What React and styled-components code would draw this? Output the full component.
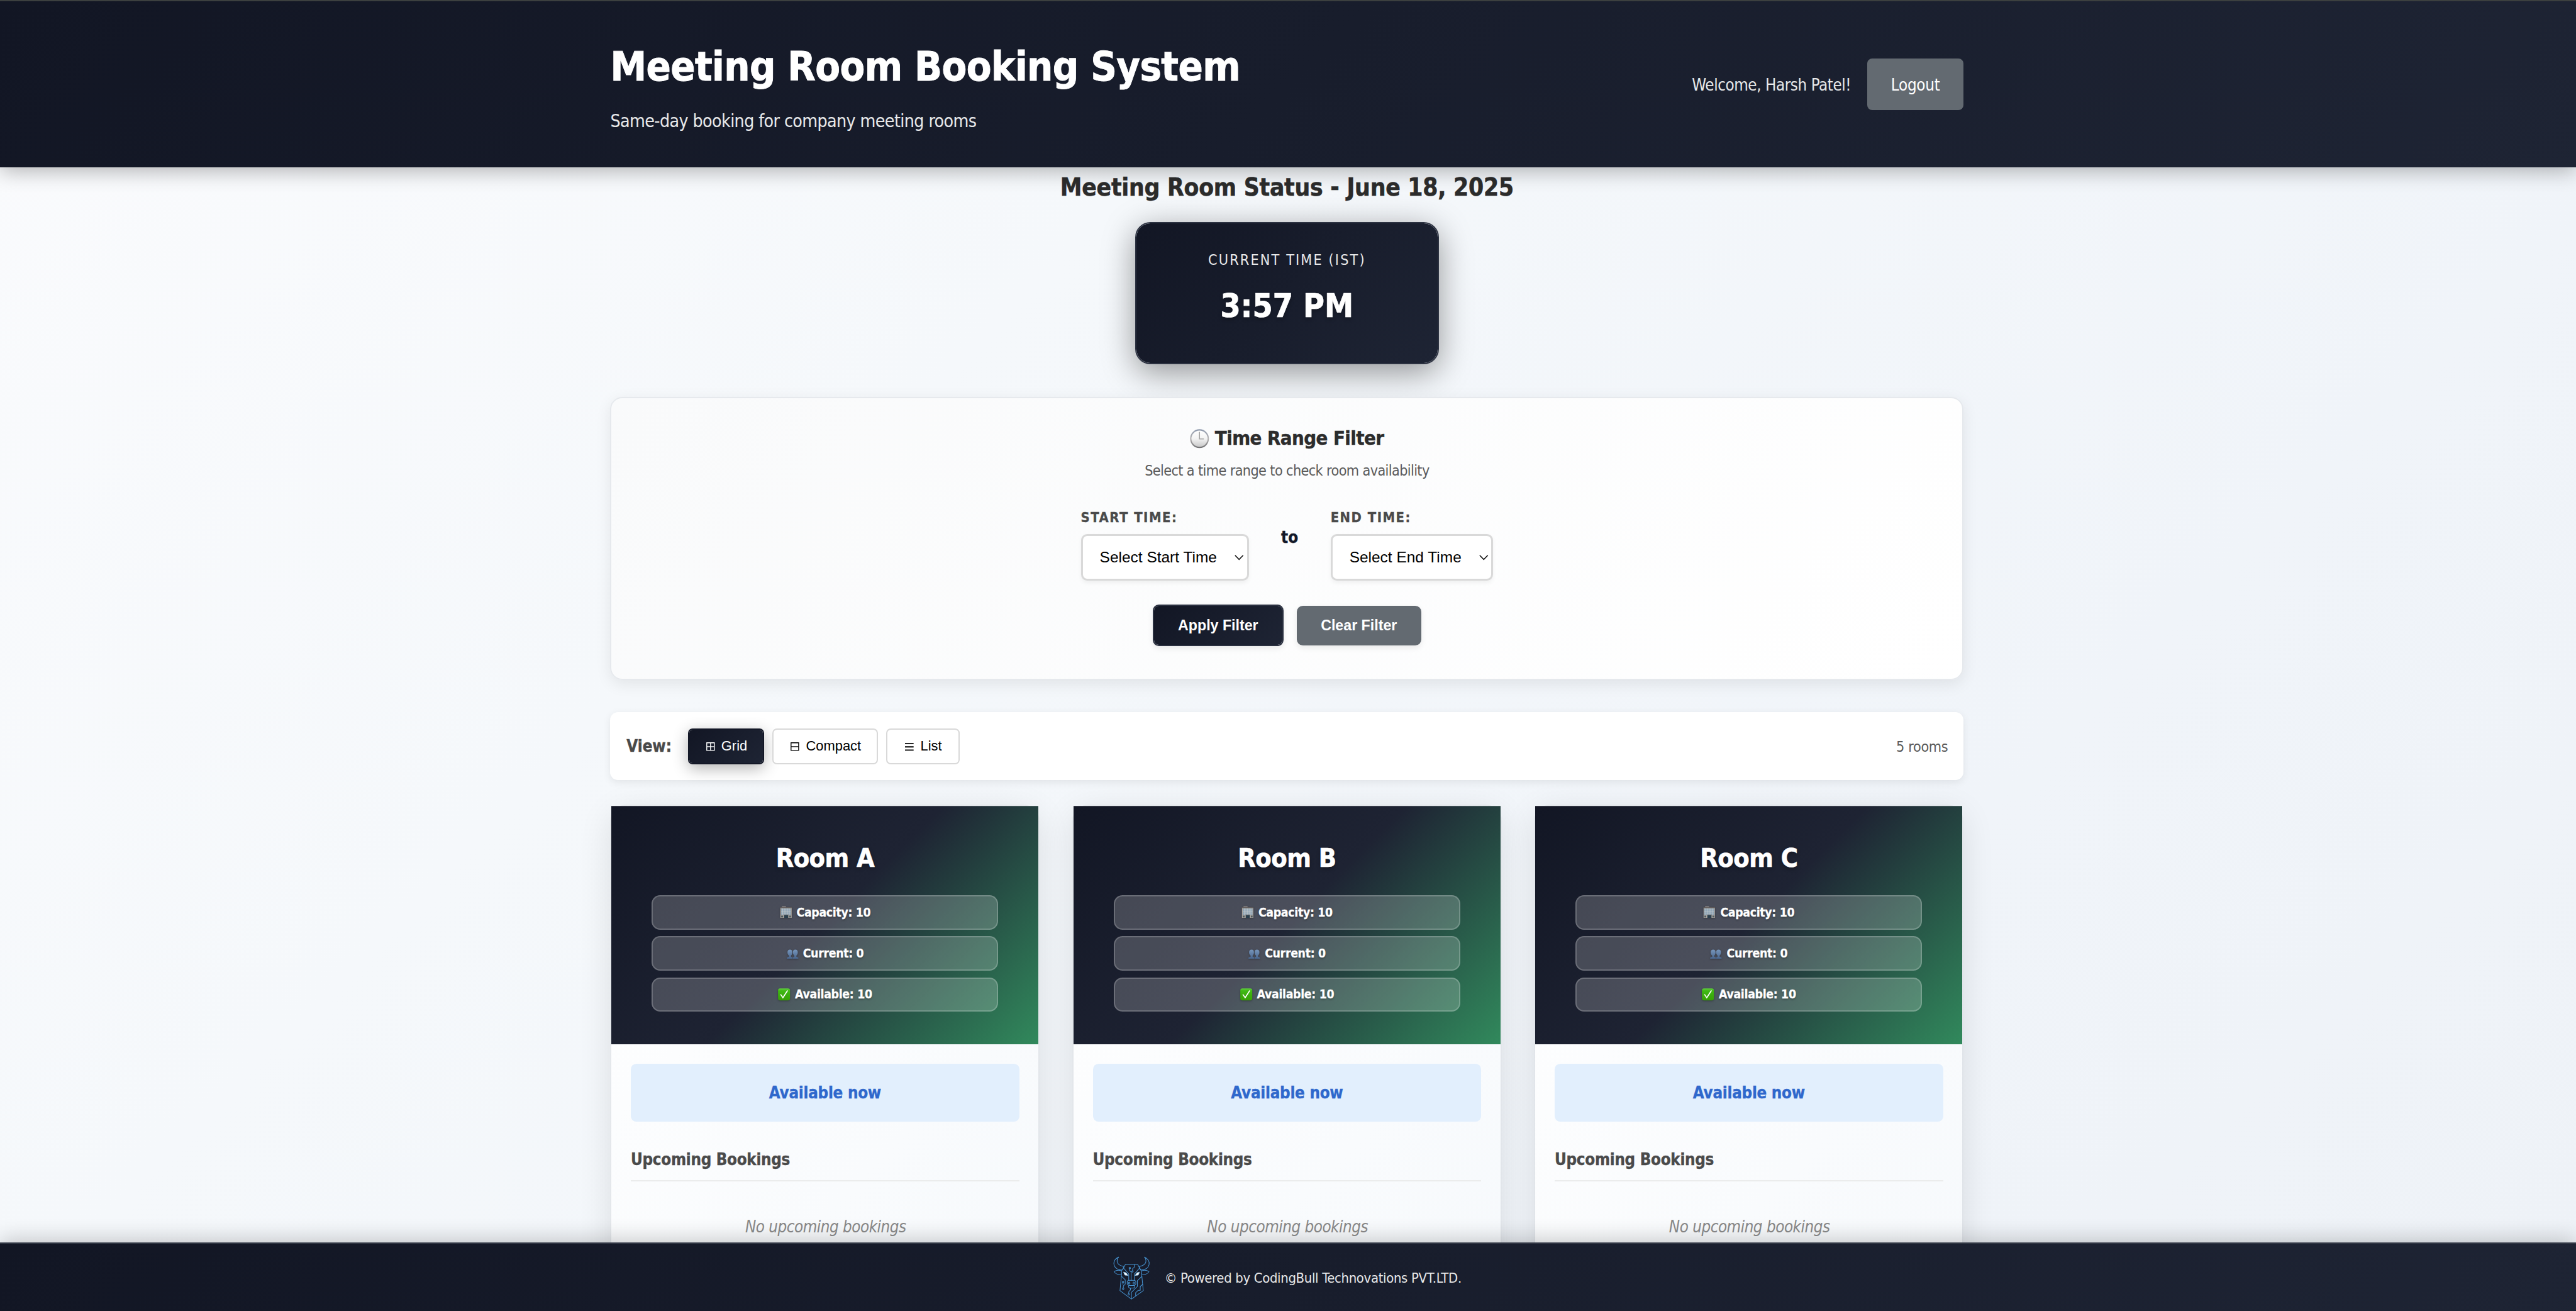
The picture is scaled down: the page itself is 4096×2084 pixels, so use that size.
import React from 'react';
import styled, { createGlobalStyle, css } from 'styled-components';

const SCALE = 4096 / 5086;
const u = (n) => `${(n * SCALE).toFixed(3)}px`;

const sans = '"DejaVu Sans Condensed", "DejaVu Sans", sans-serif';
const arial = '"Liberation Sans", Arial, sans-serif';
const navy = 'linear-gradient(135deg, #121624 0%, #1e2434 100%)';

const heavy = css`
  font-weight: 700;
  -webkit-text-stroke: 0.014em currentColor;
`;

const GlobalStyle = createGlobalStyle`
  * { box-sizing: border-box; }
  html, body { margin: 0; height: 100%; overflow: hidden; }
  h1, h2, h3, h4, p { margin: 0; }
  body { font-family: ${sans}; white-space: nowrap; -webkit-font-smoothing: antialiased; }
`;

const Shell = styled.div`
  display: flex;
  flex-direction: column;
  height: 100vh;
  overflow: hidden;
  background: linear-gradient(135deg, #fafbfd 0%, #f5f8fb 34%, #f0f4f9 72%, #eef2f7 100%);
`;

const Container = styled.div`
  width: ${u(2672)};
  margin: 0 auto;
`;

/* ---------- header ---------- */
const Header = styled.header`
  position: relative;
  z-index: 2;
  flex: none;
  display: flex;
  align-items: center;
  height: ${u(330)};
  padding-right: ${u(4)};
  border-top: 2px solid #3c403f;
  background: ${navy};
  box-shadow: 0 ${u(8)} ${u(40)} rgba(0, 0, 0, 0.3);
`;

const HeaderRow = styled(Container)`
  display: flex;
  justify-content: space-between;
  align-items: center;
`;

const Brand = styled.div`
  padding-top: ${u(19)};
`;

const Title = styled.h1`
  color: #fff;
  font-size: ${u(80)};
  line-height: ${u(94)};
  letter-spacing: -0.0095em;
  ${heavy}
`;

const Subtitle = styled.p`
  margin-top: ${u(32)};
  color: #e7e8e9;
  font-size: ${u(35.2)};
  line-height: ${u(56)};
  letter-spacing: -0.0215em;
`;

const UserArea = styled.div`
  display: flex;
  align-items: center;
  gap: ${u(32)};
`;

const Welcome = styled.span`
  padding-top: ${u(3)};
  color: #e7e8e9;
  font-size: ${u(32)};
  letter-spacing: -0.017em;
`;

const Logout = styled.button`
  width: ${u(190.5)};
  height: ${u(102)};
  padding: ${u(3)} 0 0;
  border: 0;
  border-radius: ${u(10)};
  background: #636a71;
  color: #fff;
  font: 400 ${u(32)} ${sans};
  letter-spacing: -0.0107em;
`;

/* ---------- main ---------- */
const Main = styled.main`
  flex: 1;
  min-height: 0;
  padding-right: ${u(4)};
`;

const Column = styled(Container)`
  display: flex;
  flex-direction: column;
  align-items: center;
`;

const StatusHeading = styled.h2`
  margin-top: ${u(11)};
  color: #2c2c2c;
  font-size: ${u(48)};
  line-height: ${u(58)};
  letter-spacing: -0.006em;
  ${heavy}
`;

const ClockCard = styled.section`
  display: flex;
  flex-direction: column;
  align-items: center;
  width: ${u(600)};
  height: ${u(281)};
  margin-top: ${u(39.6)};
  padding-top: ${u(48)};
  border: 2px solid #2c3241;
  border-radius: ${u(30)};
  background: ${navy} padding-box;
  box-shadow: 0 ${u(16)} ${u(64)} rgba(0, 0, 0, 0.4);
`;

const ClockLabel = styled.p`
  color: #e7e8e9;
  font-size: ${u(28.8)};
  line-height: ${u(46)};
  letter-spacing: 0.0925em;
`;

const ClockValue = styled.p`
  margin-top: ${u(17)};
  color: #fff;
  font-size: ${u(64)};
  line-height: ${u(102)};
  text-shadow: 0 ${u(4)} ${u(8)} rgba(0, 0, 0, 0.3);
  ${heavy}
`;

const FilterCard = styled.section`
  display: flex;
  flex-direction: column;
  align-items: center;
  width: 100%;
  height: ${u(558)};
  margin-top: ${u(64.4)};
  padding-top: ${u(55.8)};
  border: 2px solid #e6e9ed;
  border-radius: ${u(24)};
  background: linear-gradient(135deg, #f9fafb 0%, #ffffff 100%) padding-box;
  box-shadow: 0 ${u(8)} ${u(30)} rgba(0, 0, 0, 0.08);
`;

const FilterTitle = styled.h3`
  display: flex;
  align-items: center;
  gap: ${u(11)};
  color: #2c2c2c;
  font-size: ${u(38.4)};
  line-height: ${u(46)};
  letter-spacing: -0.0185em;
  ${heavy}
`;

const FilterHint = styled.p`
  margin-top: ${u(16.5)};
  color: #5a5a5a;
  font-size: ${u(28.8)};
  line-height: ${u(46)};
  letter-spacing: -0.0264em;
`;

const RangeRow = styled.div`
  display: flex;
  align-items: center;
  gap: ${u(64)};
  margin-top: ${u(48.5)};
`;

const Field = styled.div`
  display: flex;
  flex-direction: column;
  gap: ${u(11.4)};
`;

const FieldLabel = styled.label`
  color: #4a4a4a;
  font-size: ${u(27.2)};
  line-height: ${u(44)};
  letter-spacing: 0.068em;
  ${heavy}
`;

const Select = styled.div`
  display: flex;
  align-items: center;
  justify-content: space-between;
  width: ${({ $w }) => u($w)};
  height: ${u(91)};
  padding: 0 ${u(6)} 0 ${u(33.5)};
  border: 3px solid #d9d9d9;
  border-radius: ${u(12)};
  background: #fff;
  box-shadow: 0 ${u(4)} ${u(8)} rgba(0, 0, 0, 0.05);
  color: #000;
  font: 400 ${u(30.4)} ${arial};
`;

const To = styled.span`
  margin-bottom: ${u(24)};
  color: #121829;
  font-size: ${u(32)};
  line-height: ${u(50)};
  ${heavy}
`;

const Actions = styled.div`
  display: flex;
  align-items: center;
  gap: ${u(26)};
  margin-top: ${u(47.6)};
`;

const ActionButton = styled.button`
  width: ${u(246)};
  height: ${u(78)};
  padding: 0;
  border: 0;
  border-radius: ${u(12)};
  background: #636a71;
  color: #fff;
  font: 700 ${u(28.8)} ${arial};
  box-shadow: 0 ${u(4)} ${u(12)} rgba(0, 0, 0, 0.08);
  ${({ $primary }) => $primary && css`
    width: ${u(258)};
    height: ${u(82.4)};
    border: 2px solid #2a3040;
    background: ${navy} padding-box;
  `}
`;

const ViewBar = styled.section`
  display: flex;
  align-items: center;
  width: 100%;
  height: ${u(134.4)};
  margin-top: ${u(64)};
  padding: 0 ${u(31)} 0 ${u(32)};
  border-radius: ${u(16)};
  background: #fff;
  box-shadow: 0 ${u(4)} ${u(16)} rgba(0, 0, 0, 0.08);
`;

const ViewLabel = styled.span`
  width: ${u(121)};
  color: #4a4a4a;
  font-size: ${u(32)};
  ${heavy}
`;

const ViewOptions = styled.div`
  display: flex;
  gap: ${u(16)};
`;

const ViewButton = styled.button`
  display: flex;
  align-items: center;
  justify-content: center;
  gap: ${u(13)};
  width: ${({ $w }) => u($w)};
  height: ${u(70)};
  padding: 0 0 0 ${u(2.5)};
  border: 2px solid #d9d9d9;
  border-radius: ${u(9)};
  background: #fff;
  color: #000;
  font: 400 ${u(27.2)} ${arial};
  ${({ $active }) => $active && css`
    border-color: #131726;
    background: ${navy} padding-box;
    color: #fff;
    box-shadow: 0 ${u(8)} ${u(30)} rgba(0, 0, 0, 0.3);
  `}
`;

const RoomCount = styled.span`
  margin-left: auto;
  color: #5a5a5a;
  font-size: ${u(28.8)};
  letter-spacing: -0.0142em;
  padding-top: ${u(1.5)};
`;

/* ---------- rooms ---------- */
const RoomGrid = styled.div`
  display: grid;
  grid-template-columns: repeat(3, 1fr);
  gap: ${u(64)};
  width: 100%;
  margin-top: ${u(47.6)};
`;

const RoomCard = styled.article`
  height: ${u(1000)};
  border: 2px solid rgba(0, 0, 0, 0.06);
  border-radius: ${u(32)};
  background: linear-gradient(135deg, #ffffff 0%, #f6f9fc 100%) padding-box;
  box-shadow: 0 ${u(16)} ${u(64)} rgba(0, 0, 0, 0.1);
`;

const RoomHead = styled.header`
  display: flex;
  flex-direction: column;
  align-items: center;
  height: ${u(471)};
  padding: ${u(71.5)} ${u(79.5)} 0;
  border-top: 2px solid rgba(255, 255, 255, 0.1);
  background: linear-gradient(135deg, #121624 0%, #1e2333 50%, #31895c 100%) border-box;
`;

const RoomName = styled.h3`
  color: #fff;
  font-size: ${u(51.2)};
  line-height: ${u(62)};
  letter-spacing: -0.013em;
  text-shadow: 0 ${u(4)} ${u(8)} rgba(0, 0, 0, 0.3);
  ${heavy}
`;

const Stats = styled.div`
  display: flex;
  flex-direction: column;
  gap: ${u(13)};
  width: 100%;
  margin-top: ${u(40.7)};
`;

const Stat = styled.div`
  display: flex;
  align-items: center;
  justify-content: center;
  gap: ${u(9.5)};
  height: ${u(68)};
  border: 2px solid rgba(255, 255, 255, 0.2);
  border-radius: ${u(17)};
  background: rgba(255, 255, 255, 0.2);
  color: #fff;
  font-size: ${u(24)};
  letter-spacing: -0.0165em;
  text-shadow: 0 ${u(2)} ${u(4)} rgba(0, 0, 0, 0.3);
  ${heavy}
  svg { filter: drop-shadow(0 ${u(2)} ${u(2)} rgba(0, 0, 0, 0.3)); }
`;

const RoomBody = styled.div`
  padding: ${u(38.2)} ${u(38)};
`;

const Available = styled.div`
  display: flex;
  align-items: center;
  justify-content: center;
  height: ${u(115)};
  border-radius: ${u(11)};
  background: #e2effd;
  color: #2f68cc;
  font-size: ${u(32)};
  letter-spacing: -0.0098em;
  ${heavy}
`;

const UpcomingTitle = styled.h4`
  margin-top: ${u(49)};
  padding-bottom: ${u(15.6)};
  border-bottom: 2px solid #ebecec;
  color: #4a4a4a;
  font-size: ${u(32)};
  line-height: ${u(50)};
  letter-spacing: -0.0115em;
  ${heavy}
`;

const Empty = styled.p`
  margin-top: ${u(65)};
  padding-left: ${u(2)};
  color: #8a8a8a;
  font-size: ${u(32)};
  font-style: italic;
  line-height: ${u(50)};
  letter-spacing: -0.019em;
  text-align: center;
`;

/* ---------- footer ---------- */
const Footer = styled.footer`
  position: relative;
  z-index: 2;
  flex: none;
  display: flex;
  align-items: center;
  justify-content: center;
  gap: ${u(26)};
  height: ${u(135)};
  padding-right: ${u(4)};
  border-top: 2px solid #343a47;
  background: ${navy} padding-box;
  box-shadow: 0 ${u(-8)} ${u(40)} rgba(0, 0, 0, 0.2);
`;

const FooterText = styled.span`
  padding-top: ${u(3)};
  color: #e7e8e9;
  font-size: ${u(27.2)};
  letter-spacing: -0.0145em;
`;

/* ---------- drawings ---------- */
const Icon = styled.svg`
  flex: none;
  display: block;
  overflow: visible;
  width: ${({ $w }) => u($w)};
  height: ${({ $h }) => u($h)};
`;

const ClockIcon = () => (
  <Icon $w={38} $h={38} viewBox="0 0 38 38">
    <defs>
      <linearGradient id="rim" x1="0" y1="0" x2="0" y2="1">
        <stop offset="0" stopColor="#8d99ad" />
        <stop offset="0.5" stopColor="#b5b3b4" />
        <stop offset="1" stopColor="#6d6d6f" />
      </linearGradient>
      <linearGradient id="face" x1="0" y1="0" x2="0" y2="1">
        <stop offset="0" stopColor="#ffffff" />
        <stop offset="0.5" stopColor="#f3f3f3" />
        <stop offset="1" stopColor="#c9c9c9" />
      </linearGradient>
    </defs>
    <circle cx="19" cy="19" r="18.6" fill="url(#rim)" />
    <circle cx="19" cy="19" r="16" fill="url(#face)" />
    <path d="M18.9 5.5V19.6H27.5" fill="none" stroke="#a3a3a3" strokeWidth="2" />
  </Icon>
);

const Chevron = () => (
  <Icon $w={18} $h={10} viewBox="0 0 18 10">
    <path d="M1 1L9 9L17 1" fill="none" stroke="#111" strokeWidth="2" />
  </Icon>
);

const GridIcon = () => (
  <Icon $w={17} $h={17} viewBox="0 0 17 17">
    <path d="M1 1H16V16H1ZM8.5 1V16M1 8.5H16" fill="none" stroke="currentColor" strokeWidth="1.7" />
  </Icon>
);

const CompactIcon = () => (
  <Icon $w={17} $h={17} viewBox="0 0 17 17">
    <path d="M1 1H16V16H1ZM1 8.5H16" fill="none" stroke="currentColor" strokeWidth="1.7" />
  </Icon>
);

const ListIcon = () => (
  <Icon $w={17} $h={17} viewBox="0 0 17 17">
    <path d="M0 2.7H17M0 9H17M0 15.3H17" fill="none" stroke="currentColor" strokeWidth="2.3" />
  </Icon>
);

const BuildingIcon = () => (
  <Icon $w={24} $h={23} viewBox="0 0 24 23">
    <rect x="4" y="0" width="8" height="2" fill="#a79f98" />
    <rect x="0.6" y="1.4" width="23" height="2" fill="#5f5a58" />
    <rect x="1" y="3" width="22.4" height="19.4" fill="#a9a39c" />
    <rect x="2.6" y="4" width="19.2" height="12.6" fill="#86a0b4" />
    <path d="M5.6 4V17M8.8 4V17M12 4V17M15.2 4V17M18.6 4V17M2.6 6.8H22M2.6 9.8H22M2.6 12.8H22" stroke="#c9cbca" strokeWidth="0.9" />
    <rect x="8" y="16" width="9" height="1.4" fill="#716a66" />
    <rect x="8.4" y="17.4" width="8.2" height="5" fill="#2a3f4d" />
    <rect x="2.6" y="18" width="3.6" height="3.6" fill="#4d5a60" />
    <rect x="18.6" y="18" width="3.4" height="3.6" fill="#4d5a60" />
  </Icon>
);

const PeopleIcon = () => (
  <Icon $w={23} $h={23} viewBox="0 -4.5 23 23">
    <defs>
      <linearGradient id="bust" x1="0" y1="0" x2="0" y2="1">
        <stop offset="0" stopColor="#7695bb" />
        <stop offset="1" stopColor="#48648b" />
      </linearGradient>
    </defs>
    <path
      fill="url(#bust)"
      d="M6.3 0C9.2 0 11 2 11 5C11 8 10 10 8.4 11.6V13.8L11.6 15.4V18H0.2V15.6L4.4 13.8V11.6C2.4 10 1.4 8 1.4 5C1.4 2 3.4 0 6.3 0ZM16.9 0C20 0 21.8 2 21.8 5C21.8 8 20.8 10 19 11.6V13.8L22.9 15.6V18H12.2V15.4L15 13.8V11.6C13.2 10 12.2 8 12.2 5C12.2 2 14 0 16.9 0Z"
    />
  </Icon>
);

const CheckIcon = () => (
  <Icon $w={24} $h={24} viewBox="0 0 24 24">
    <defs>
      <linearGradient id="check" x1="0" y1="0" x2="0" y2="1">
        <stop offset="0" stopColor="#63d043" />
        <stop offset="0.2" stopColor="#3fb913" />
        <stop offset="1" stopColor="#36a005" />
      </linearGradient>
    </defs>
    <rect x="0.2" y="0.2" width="23.6" height="23.6" rx="4" fill="url(#check)" />
    <path d="M5.6 12.6L9.8 18.6L18.6 5" fill="none" stroke="#fff" strokeWidth="2.1" strokeLinecap="round" />
  </Icon>
);

const BullLogo = () => (
  <Icon $w={76.7} $h={90} viewBox="45 30 230 270">
    <g fill="none" stroke="#4794d2" strokeWidth="3.8" strokeLinejoin="round" strokeLinecap="round">
      <path d="M81 46C60 56 50 74 54 92C60 113 80 123 104 122L112 102C92 98 77 92 73 76C70 62 75 52 81 46Z" />
      <path d="M234 46C255 56 265 74 261 92C255 113 235 123 211 122L203 102C223 98 238 92 242 76C245 62 240 52 234 46Z" />
      <path d="M104 122L121 90H194L211 122" />
      <path d="M98 128C82 122 66 124 54 132C62 148 84 152 99 145" />
      <path d="M217 128C233 122 249 124 261 132C253 148 231 152 216 145" />
      <path d="M98 124V152L89 245L157 295L227 245L218 152V124" />
      <path d="M111 112L141 146V184M204 112L175 146V184" />
      <path d="M147 116V126L155 134V184M174 91V106L164 114V126" />
      <circle cx="147" cy="111" r="4.5" />
      <circle cx="163" cy="131" r="4.5" />
      <path d="M138 184H177L183 190V206L175 214H141L132 206V190Z" />
      <ellipse cx="144" cy="200" rx="4.5" ry="6" />
      <ellipse cx="171" cy="200" rx="4.5" ry="6" />
      <path d="M139 215V222L144 229H171L176 222V215" />
      <path d="M98 160L120 180V206L109 217V228M107 199V208" />
      <circle cx="107" cy="194" r="4.5" />
      <circle cx="108" cy="233" r="4.5" />
      <path d="M151 230V241L141 251V262" />
      <circle cx="141" cy="267" r="4.5" />
      <path d="M157 293V255L192 220V186L219 160M182 276V257L197 243H209V220L224 207" />
    </g>
    <path d="M110 135L125 139L137 155L118 153Z" fill="#fff" stroke="#8fc8ee" strokeWidth="3" />
    <path d="M205 135L190 139L178 155L197 153Z" fill="#fff" stroke="#8fc8ee" strokeWidth="3" />
  </Icon>
);

const rooms = [
  { name: 'Room A', capacity: 10, current: 0 },
  { name: 'Room B', capacity: 10, current: 0 },
  { name: 'Room C', capacity: 10, current: 0 },
];

const Room = ({ name, capacity, current }) => (
  <RoomCard>
    <RoomHead>
      <RoomName>{name}</RoomName>
      <Stats>
        <Stat><BuildingIcon /><span>Capacity: {capacity}</span></Stat>
        <Stat><PeopleIcon /><span>Current: {current}</span></Stat>
        <Stat><CheckIcon /><span>Available: {capacity - current}</span></Stat>
      </Stats>
    </RoomHead>
    <RoomBody>
      <Available>Available now</Available>
      <UpcomingTitle>Upcoming Bookings</UpcomingTitle>
      <Empty>No upcoming bookings</Empty>
    </RoomBody>
  </RoomCard>
);

export default function App() {
  return (
    <Shell>
      <GlobalStyle />
      <Header>
        <HeaderRow>
          <Brand>
            <Title>Meeting Room Booking System</Title>
            <Subtitle>Same-day booking for company meeting rooms</Subtitle>
          </Brand>
          <UserArea>
            <Welcome>Welcome, Harsh Patel!</Welcome>
            <Logout>Logout</Logout>
          </UserArea>
        </HeaderRow>
      </Header>
      <Main>
        <Column>
          <StatusHeading>Meeting Room Status - June 18, 2025</StatusHeading>
          <ClockCard>
            <ClockLabel>CURRENT TIME (IST)</ClockLabel>
            <ClockValue>3:57 PM</ClockValue>
          </ClockCard>
          <FilterCard>
            <FilterTitle><ClockIcon /><span>Time Range Filter</span></FilterTitle>
            <FilterHint>Select a time range to check room availability</FilterHint>
            <RangeRow>
              <Field>
                <FieldLabel>START TIME:</FieldLabel>
                <Select $w={331.5}>Select Start Time<Chevron /></Select>
              </Field>
              <To>to</To>
              <Field>
                <FieldLabel>END TIME:</FieldLabel>
                <Select $w={321}>Select End Time<Chevron /></Select>
              </Field>
            </RangeRow>
            <Actions>
              <ActionButton $primary>Apply Filter</ActionButton>
              <ActionButton>Clear Filter</ActionButton>
            </Actions>
          </FilterCard>
          <ViewBar>
            <ViewLabel>View:</ViewLabel>
            <ViewOptions>
              <ViewButton $w={151} $active><GridIcon />Grid</ViewButton>
              <ViewButton $w={209}><CompactIcon />Compact</ViewButton>
              <ViewButton $w={144.5}><ListIcon />List</ViewButton>
            </ViewOptions>
            <RoomCount>5 rooms</RoomCount>
          </ViewBar>
          <RoomGrid>
            {rooms.map((room) => <Room key={room.name} {...room} />)}
          </RoomGrid>
        </Column>
      </Main>
      <Footer>
        <BullLogo />
        <FooterText>© Powered by CodingBull Technovations PVT.LTD.</FooterText>
      </Footer>
    </Shell>
  );
}
